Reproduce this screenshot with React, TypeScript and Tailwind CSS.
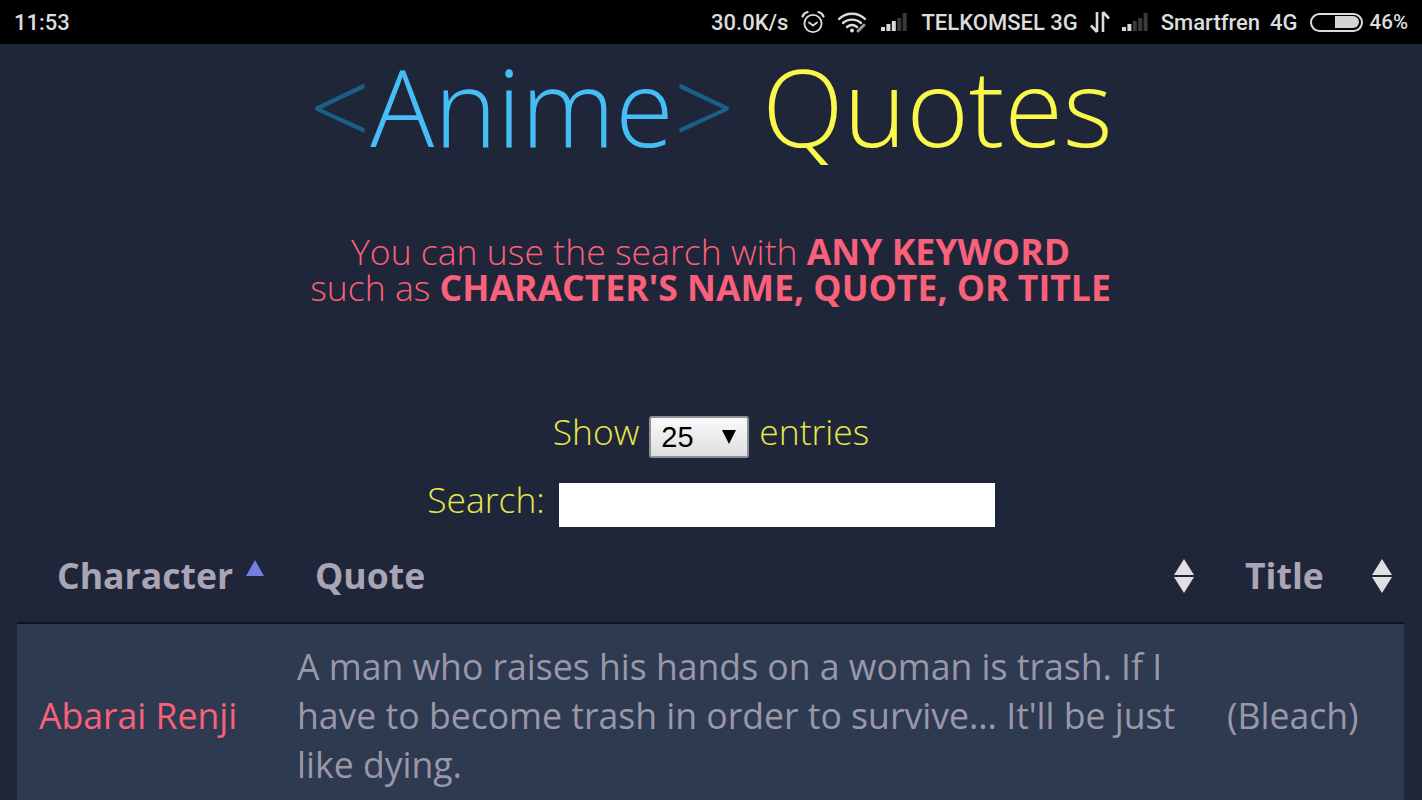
const sans = "font-['Open_Sans',sans-serif]";

function SignalBars({ lit }: { lit: number }) {
  const bars = [4, 7, 10, 13, 18];
  return (
    <svg width="28" height="20" viewBox="0 0 28 20">
      {bars.map((h, i) => (
        <rect key={i} x={1 + i * 5.4} y={19 - h} width="4" height={h} fill={i < lit ? "#d8d8d8" : "#3a3a3a"} />
      ))}
    </svg>
  );
}

function StatusBar() {
  return (
    <div className="h-11 bg-black flex items-center justify-between pl-[14px] pr-[14px] text-[#dcdcdc] text-[22px] font-medium font-['Roboto',sans-serif]">
      <span>11:53</span>
      <div className="flex items-center">
        <span>30.0K/s</span>
        <svg className="ml-[12px]" width="26" height="26" viewBox="0 0 26 26" fill="none" stroke="#dcdcdc" strokeWidth="1.8">
          <circle cx="13" cy="14.5" r="8.6" />
          <path d="M9 13.5l4 3 4-3" strokeLinecap="round" strokeLinejoin="round" />
          <path d="M2.5 7.5C3.5 4.8 5.5 3.4 7.6 3M23.5 7.5C22.5 4.8 20.5 3.4 18.4 3" strokeWidth="2.2" strokeLinecap="round" />
        </svg>
        <svg className="ml-[11px]" width="32" height="24" viewBox="0 0 32 24" fill="none" stroke="#dcdcdc" strokeWidth="2.4" strokeLinecap="round">
          <path d="M2 9c7-7 19-7 26 0" />
          <path d="M6 13c5-4.5 13-4.5 18 0" />
          <path d="M10 17c3-2.4 7-2.4 10 0" />
          <circle cx="15" cy="20.5" r="2" fill="#dcdcdc" stroke="none" />
          <path d="M21 21l6-6" strokeWidth="3" stroke="#9a9a9a" />
        </svg>
        <span className="ml-[11px] flex"><SignalBars lit={3} /></span>
        <span className="ml-[13px]">TELKOMSEL 3G</span>
        <svg className="ml-[10px]" width="24" height="24" viewBox="0 0 24 24" fill="none" stroke="#dcdcdc" strokeWidth="2.6">
          <path d="M9 2v20M3 15.5l6 6.5" />
          <path d="M15 22V2M15 2l6 6.5" />
        </svg>
        <span className="ml-[9px] flex"><SignalBars lit={2} /></span>
        <span className="ml-[12px]">Smartfren</span>
        <span className="ml-[10px]">4G</span>
        <div className="ml-[12px] w-[53px] h-[19px] rounded-full border-2 border-[#dcdcdc] p-[1.5px] flex justify-end">
          <div className="w-[24px] h-full bg-[#d4d4d4] rounded-r-full" />
        </div>
        <span className="ml-[7px] text-[20.5px]">46%</span>
      </div>
    </div>
  );
}

function SortBoth() {
  return (
    <svg width="22" height="36" viewBox="0 0 22 36" fill="#e0e0e4">
      <path d="M11 1l10 16H1z" />
      <path d="M11 35l10-16H1z" />
    </svg>
  );
}

export default function App() {
  return (
    <div className={`h-screen overflow-hidden bg-[#202639] ${sans}`}>
      <StatusBar />
      <h1 className="text-center text-[106.5px] leading-[124px] font-light">
        <span className="text-[#1a5f86]">&lt;</span>
        <span className="text-[#45bdf5]">Anime</span>
        <span className="text-[#1a5f86]">&gt;</span>
        <span className="text-[#faf84a]"> Quotes</span>
      </h1>
      <p className="mt-[65px] -ml-[1px] text-center text-[35.6px] leading-[36px] font-light text-[#f9607a]">
        You can use the search with <strong className="font-bold">ANY KEYWORD</strong>
        <br />
        such as <strong className="font-bold">CHARACTER'S NAME, QUOTE, OR TITLE</strong>
      </p>
      <div className="mt-[102px] h-[48px] flex items-center justify-center text-[35.4px] leading-[48px] font-light text-[#e8e84a]">
        <span>Show</span>
        <div className="mx-[10px] mt-[12px] w-[100px] h-[42px] rounded-[3px] border-2 border-[#8d8f9a] bg-linear-to-b from-[#fafafa] to-[#dedede] flex items-center justify-between pl-[10px] pr-[11px] text-black text-[29px] font-['Liberation_Sans',sans-serif] font-normal">
          <span>25</span>
          <span className="w-0 h-0 border-x-[7px] border-x-transparent border-t-[14px] border-t-black" />
        </div>
        <span>entries</span>
      </div>
      <div className="mt-[20px] h-[48px] flex items-center justify-center text-[35.4px] leading-[48px] font-light text-[#e8e84a]">
        <span>Search:</span>
        <div className="ml-[14px] mt-[12px] w-[436px] h-[44px] bg-white" />
      </div>
      <div className="pl-[17px] pr-[18px] mt-[15px]">
        <table className="w-full table-fixed border-collapse">
          <colgroup>
            <col className="w-[258px]" />
            <col />
            <col className="w-[199px]" />
          </colgroup>
          <thead>
            <tr className="h-[85px] border-b-2 border-[#10131c] text-left text-[35.6px] font-bold text-[#a9a5b5]">
              <th className="pl-[40px] pb-[9px] relative">
                Character
                <svg className="absolute left-[228px] top-[22px]" width="20" height="16" viewBox="0 0 20 16" fill="#737ce0">
                  <path d="M10 0l9 16H1z" />
                </svg>
              </th>
              <th className="pl-[40px] pb-[9px] relative">
                Quote
                <span className="absolute right-[10px] top-[20px]"><SortBoth /></span>
              </th>
              <th className="pl-[40px] pb-[9px] relative">
                Title
                <span className="absolute right-[11px] top-[20px]"><SortBoth /></span>
              </th>
            </tr>
          </thead>
          <tbody>
            <tr className="bg-[#2e3a50] text-[35.6px] leading-[49px] text-[#9a97a8]">
              <td className="pl-[22px] text-[#f9607a]">Abarai Renji</td>
              <td className="pl-[22px] pr-[20px] py-[18px]">
                A man who raises his hands on a woman is trash. If I have to become trash in order to survive... It'll be just like dying.
              </td>
              <td className="pl-[22px]">(Bleach)</td>
            </tr>
          </tbody>
        </table>
      </div>
    </div>
  );
}
